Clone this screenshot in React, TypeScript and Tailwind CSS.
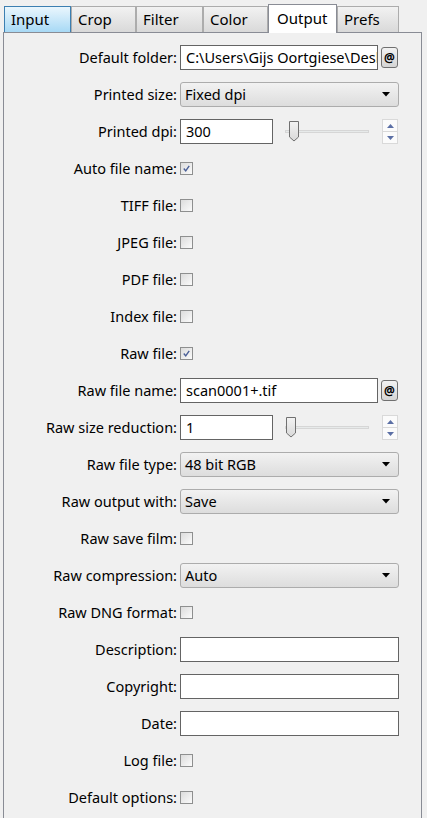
import React from 'react';

const font = { fontFamily: '"Noto Sans", "Open Sans", sans-serif' };

function Check({ checked }: { checked?: boolean }) {
  return (
    <div className="w-[13px] h-[13px] border border-[#8e8f8f] bg-gradient-to-br from-[#dcdcdc] to-[#fbfbfb] p-[2px] flex items-center justify-center">
      {checked && (
        <svg width="9" height="9" viewBox="0 0 9 9">
          <path d="M1 4.5 L3.5 7.5 L8 1" fill="none" stroke="#4a5f97" strokeWidth="1.8" />
        </svg>
      )}
    </div>
  );
}

function TextBox({ value, w }: { value?: string; w: string }) {
  return (
    <div className={`${w} h-[25px] border border-[#646464] bg-white px-[5px] flex items-center overflow-hidden whitespace-nowrap text-[14.5px] text-black`}>
      {value}
    </div>
  );
}

function Select({ value }: { value: string }) {
  return (
    <div className="w-[219px] h-[25px] border border-[#acacac] rounded-[3px] bg-gradient-to-b from-[#f2f2f2] to-[#dddddd] pl-[4px] pr-[8px] flex items-center justify-between text-[14.5px] text-black">
      <span>{value}</span>
      <svg width="8" height="5" viewBox="0 0 8 5">
        <path d="M0 0 H8 L4 4.5 Z" fill="#000" />
      </svg>
    </div>
  );
}

function AtButton() {
  return (
    <div className="w-[17px] h-[21px] border border-[#707070] rounded-[3px] bg-gradient-to-b from-[#f2f2f2] to-[#d5d5d5] flex items-center justify-center text-[12px] font-bold text-black leading-none">
      @
    </div>
  );
}

function Slider({ pos }: { pos: number }) {
  return (
    <div className="flex items-center">
      <div className="relative w-[84px] h-[22px] ml-[12px]">
        <div className="absolute left-0 right-0 top-[9px] h-[3px] border border-[#d6d6d6] bg-[#e7eaea]" />
        <svg className="absolute top-0" style={{ left: pos }} width="12" height="21" viewBox="0 0 12 21">
          <defs>
            <linearGradient id="th" x1="0" x2="0" y1="0" y2="1">
              <stop offset="0" stopColor="#f3f3f3" />
              <stop offset="1" stopColor="#d8d8d8" />
            </linearGradient>
          </defs>
          <path d="M1.5 0.5 H10.5 V16 L6 20 L1.5 16 Z" fill="url(#th)" stroke="#707070" />
        </svg>
      </div>
      <div className="ml-[13px] w-[16px] h-[25px] border border-[#d9d9d9] bg-[#fbfbfb] flex flex-col">
        <div className="flex-1 border-b border-[#d9d9d9] flex items-center justify-center">
          <svg width="7" height="4" viewBox="0 0 7 4"><path d="M0 4 H7 L3.5 0 Z" fill="#5b6fa5" /></svg>
        </div>
        <div className="flex-1 flex items-center justify-center">
          <svg width="7" height="4" viewBox="0 0 7 4"><path d="M0 0 H7 L3.5 4 Z" fill="#5b6fa5" /></svg>
        </div>
      </div>
    </div>
  );
}

function Row({ label, children }: { label: string; children: React.ReactNode }) {
  return (
    <div className="h-[37px] flex items-center">
      <div className="w-[176px] text-right text-[14.5px] text-black whitespace-nowrap pr-[3px]">{label}</div>
      <div className="flex items-center">{children}</div>
    </div>
  );
}

const tabs = ['Input', 'Crop', 'Filter', 'Color', 'Output', 'Prefs'];
const widths = ['w-[67px]', 'w-[65px]', 'w-[67px]', 'w-[65px]', 'w-[69px]', 'w-[62px]'];

export default function App() {
  return (
    <div className="w-[427px] h-[818px] bg-[#f0f0f0] overflow-hidden" style={font}>
      <div className="h-[32px] flex items-end pl-[4px]">
        {tabs.map((t, i) => {
          if (t === 'Output') {
            return (
              <div key={t} className={`${widths[i]} h-[29px] -mb-px relative z-10 bg-white border border-b-0 border-[#898c95] pl-[8px] pt-[2px] text-[15px] text-black`}>
                {t}
              </div>
            );
          }
          if (t === 'Input') {
            return (
              <div key={t} className={`${widths[i]} h-[26px] bg-gradient-to-b from-[#eaf6fd] to-[#a7d9f5] border border-b-0 border-[#3c7fb1] pl-[6px] pt-[1px] text-[15px] text-black`}>
                {t}
              </div>
            );
          }
          return (
            <div key={t} className={`${widths[i]} h-[26px] bg-gradient-to-b from-[#f2f2f2] to-[#d9d9d9] border border-b-0 border-[#acacac] pl-[6px] pt-[1px] text-[15px] text-black`}>
              {t}
            </div>
          );
        })}
      </div>
      <div className="ml-[3px] w-[419px] h-[790px] border border-[#898c95] border-b-0 bg-[#f0f0f0] pt-[6px]">
        <Row label="Default folder:">
          <TextBox w="w-[198px]" value="C:\Users\Gijs Oortgiese\Desktop" />
          <div className="ml-[3px]"><AtButton /></div>
        </Row>
        <Row label="Printed size:"><Select value="Fixed dpi" /></Row>
        <Row label="Printed dpi:">
          <TextBox w="w-[93px]" value="300" />
          <Slider pos={3} />
        </Row>
        <Row label="Auto file name:"><Check checked /></Row>
        <Row label="TIFF file:"><Check /></Row>
        <Row label="JPEG file:"><Check /></Row>
        <Row label="PDF file:"><Check /></Row>
        <Row label="Index file:"><Check /></Row>
        <Row label="Raw file:"><Check checked /></Row>
        <Row label="Raw file name:">
          <TextBox w="w-[198px]" value="scan0001+.tif" />
          <div className="ml-[3px]"><AtButton /></div>
        </Row>
        <Row label="Raw size reduction:">
          <TextBox w="w-[93px]" value="1" />
          <Slider pos={0} />
        </Row>
        <Row label="Raw file type:"><Select value="48 bit RGB" /></Row>
        <Row label="Raw output with:"><Select value="Save" /></Row>
        <Row label="Raw save film:"><Check /></Row>
        <Row label="Raw compression:"><Select value="Auto" /></Row>
        <Row label="Raw DNG format:"><Check /></Row>
        <Row label="Description:"><TextBox w="w-[219px]" /></Row>
        <Row label="Copyright:"><TextBox w="w-[219px]" /></Row>
        <Row label="Date:"><TextBox w="w-[219px]" /></Row>
        <Row label="Log file:"><Check /></Row>
        <Row label="Default options:"><Check /></Row>
      </div>
    </div>
  );
}
